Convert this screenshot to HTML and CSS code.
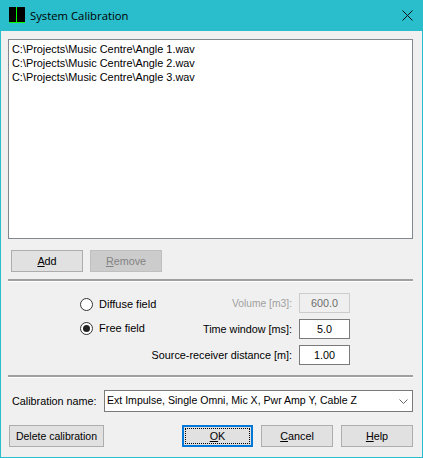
FILE: index.html
```html
<!DOCTYPE html>
<html lang="en">
<head>
<meta charset="utf-8">
<title>System Calibration</title>
<link rel="stylesheet" href="styles.css">
</head>
<body>
<div class="window">
  <header class="titlebar">
    <svg class="app-icon" width="16" height="16" viewBox="0 0 16 16" shape-rendering="crispEdges" aria-hidden="true">
      <rect x="0" y="0" width="16" height="16" fill="#000"/>
      <rect x="7" y="0" width="1" height="15" fill="#00ff00"/>
      <rect x="0" y="15" width="16" height="1" fill="#00ff00"/>
    </svg>
    <span class="title">System Calibration</span>
    <svg class="close" width="11" height="11" viewBox="0 0 11 11" aria-hidden="true">
      <path d="M0.5 0.5 L10.5 10.5 M10.5 0.5 L0.5 10.5" stroke="#111" stroke-width="1" fill="none"/>
    </svg>
  </header>
  <main class="content">
    <div class="listbox">
      <div class="list-item">C:\Projects\Music Centre\Angle 1.wav</div>
      <div class="list-item">C:\Projects\Music Centre\Angle 2.wav</div>
      <div class="list-item">C:\Projects\Music Centre\Angle 3.wav</div>
    </div>
    <div class="list-actions">
      <button class="btn"><u>A</u>dd</button>
      <button class="btn disabled"><u>R</u>emove</button>
    </div>
    <div class="separator"></div>
    <div class="params">
      <div class="radios">
        <label class="radio"><span class="radio-mark"></span>Diffuse field</label>
        <label class="radio"><span class="radio-mark checked"></span>Free field</label>
      </div>
      <div class="fields">
        <span class="field-label muted">Volume [m3]:</span>
        <span class="input muted-input">600.0</span>
        <span class="field-label">Time window [ms]:</span>
        <span class="input">5.0</span>
        <span class="field-label">Source-receiver distance [m]:</span>
        <span class="input">1.00</span>
      </div>
    </div>
    <div class="separator lower"></div>
    <div class="name-row">
      <span class="name-label">Calibration name:</span>
      <div class="combo">
        <span class="combo-text">Ext Impulse, Single Omni, Mic X, Pwr Amp Y, Cable Z</span>
        <svg class="chevron" width="9" height="5" viewBox="0 0 9 5" aria-hidden="true">
          <path d="M0.5 0.5 L4.5 4.5 L8.5 0.5" stroke="#666" stroke-width="1" fill="none"/>
        </svg>
      </div>
    </div>
    <div class="footer">
      <button class="btn delete">Delete calibration</button>
      <div class="footer-right">
        <button class="btn ok"><span class="focus-ring"><u>O</u>K</span></button>
        <button class="btn"><u>C</u>ancel</button>
        <button class="btn help"><u>H</u>elp</button>
      </div>
    </div>
  </main>
</div>
</body>
</html>
```
FILE: styles.css
```css
* { box-sizing: border-box; }
html, body { margin: 0; padding: 0; }
body {
  width: 423px;
  height: 458px;
  overflow: hidden;
  background: #2abdcb;
  font-family: "Liberation Sans", Arial, sans-serif;
  font-size: 10.8px;
  color: #000;
}
.window {
  width: 423px;
  height: 458px;
  display: flex;
  flex-direction: column;
  background: #2abdcb;
}
.titlebar {
  height: 31px;
  flex: none;
  display: flex;
  align-items: flex-start;
  padding: 7px 0 0 9px;
}
.app-icon { flex: none; }
.title {
  margin-left: 5px;
  font-family: "Open Sans", "Noto Sans", sans-serif;
  font-size: 11.3px;
  line-height: 17px;
  color: #000;
  flex: 1;
}
.close { flex: none; margin: 3px 10px 0 0; }
.content {
  flex: 1;
  margin: 0 1px 1px 1px;
  background: #f0f0f0;
  padding: 8px 9px 0 7px;
  display: flex;
  flex-direction: column;
}
.listbox {
  height: 200px;
  background: #fff;
  border: 1px solid #828790;
  padding: 2px 3px;
  font-size: 10.9px;
}
.list-item { height: 14px; line-height: 14px; white-space: nowrap; }
.list-actions {
  display: flex;
  gap: 7px;
  margin: 11px 0 0 3px;
}
.btn {
  width: 72px;
  height: 22px;
  padding: 0;
  border: 1px solid #adadad;
  background: #e1e1e1;
  font: inherit;
  color: #000;
  display: flex;
  align-items: center;
  justify-content: center;
}
.btn.disabled { background: #cccccc; border-color: #bfbfbf; color: #838383; }
.separator {
  height: 3px;
  margin-top: 7px;
  border-top: 2px solid #a0a0a0;
  border-bottom: 1px solid #fff;
}
.separator.lower { margin-top: 10px; }
.params {
  display: flex;
  justify-content: space-between;
  padding: 11px 63px 0 72px;
  white-space: nowrap;
}
.radios {
  width: 60px;
  padding-top: 1px;
  font-size: 11px;
  display: flex;
  flex-direction: column;
}
.radio {
  height: 20px;
  margin-bottom: 4px;
  display: flex;
  align-items: center;
  gap: 6px;
}
.radio-mark {
  width: 13px;
  height: 13px;
  flex: none;
  border: 1px solid #333;
  border-radius: 50%;
  background: #fff;
  display: flex;
  align-items: center;
  justify-content: center;
}
.radio-mark.checked::after {
  content: "";
  width: 7px;
  height: 7px;
  border-radius: 50%;
  background: #222;
}
.fields {
  display: grid;
  grid-template-columns: auto 51px;
  grid-auto-rows: 20px;
  row-gap: 6px;
  column-gap: 7px;
  align-items: center;
  justify-items: end;
}
.muted { color: #a0a0a0; font-size: 10.3px; }
.input {
  width: 51px;
  height: 20px;
  background: #fff;
  border: 1px solid #7a7a7a;
  display: flex;
  align-items: center;
  justify-content: center;
}
.input.muted-input { background: #efefef; border-color: #cccccc; color: #6d6d6d; }
.name-row {
  display: flex;
  align-items: center;
  margin-top: 12px;
  white-space: nowrap;
}
.name-label { width: 96px; padding-left: 4px; flex: none; }
.combo {
  flex: 1;
  height: 22px;
  background: #fff;
  border: 1px solid #7a7a7a;
  display: flex;
  align-items: center;
  justify-content: space-between;
  padding: 0 4px 2px 2px;
  font-size: 10.55px;
}
.chevron { flex: none; margin-top: 2px; }
.footer {
  display: flex;
  justify-content: space-between;
  margin: 13px 0 0 1px;
}
.btn.delete { width: 95px; font-size: 10.5px; }
.footer-right { display: flex; gap: 8px; }
.btn.ok { width: 71px; border: 2px solid #0078d7; padding: 1px; }
.focus-ring {
  width: 100%;
  height: 100%;
  border: 1px dotted #000;
  display: flex;
  align-items: center;
  justify-content: center;
}
```
